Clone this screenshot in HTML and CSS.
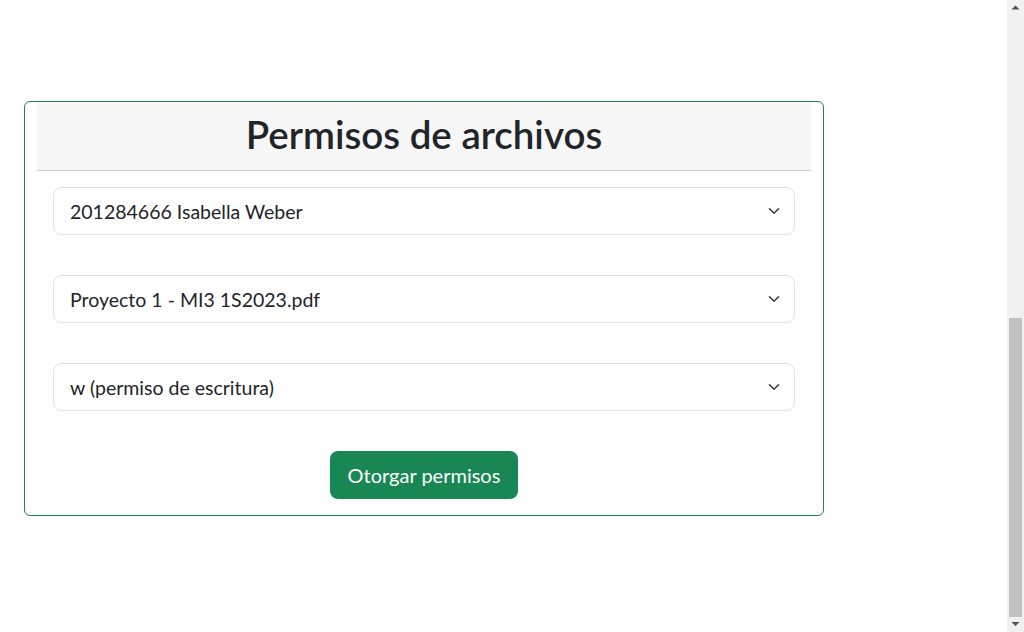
FILE: index.html
```html
<!DOCTYPE html>
<html lang="es">
<head>
<meta charset="utf-8">
<title>Permisos de archivos</title>
<link rel="stylesheet" href="styles.css">
</head>
<body>
<main class="page">
  <section class="card">
    <header class="card-header">
      <h1 class="title">Permisos de archivos</h1>
    </header>
    <form class="card-body">
      <div class="select">
        <span class="select-text">201284666 Isabella Weber</span>
        <svg class="chevron" width="16" height="12" viewBox="0 0 16 16"><path d="m2 5 6 6 6-6" fill="none" stroke="#343a40" stroke-width="2" stroke-linecap="round" stroke-linejoin="round"/></svg>
      </div>
      <div class="select">
        <span class="select-text">Proyecto 1 - MI3 1S2023.pdf</span>
        <svg class="chevron" width="16" height="12" viewBox="0 0 16 16"><path d="m2 5 6 6 6-6" fill="none" stroke="#343a40" stroke-width="2" stroke-linecap="round" stroke-linejoin="round"/></svg>
      </div>
      <div class="select">
        <span class="select-text">w (permiso de escritura)</span>
        <svg class="chevron" width="16" height="12" viewBox="0 0 16 16"><path d="m2 5 6 6 6-6" fill="none" stroke="#343a40" stroke-width="2" stroke-linecap="round" stroke-linejoin="round"/></svg>
      </div>
      <div class="actions">
        <button type="button" class="btn">Otorgar permisos</button>
      </div>
    </form>
  </section>
</main>
<aside class="scrollbar" aria-hidden="true">
  <div class="sb-btn">
    <svg width="17" height="15" viewBox="0 0 17 15"><polygon points="4.5,9.5 12.5,9.5 8.5,5.5" fill="#505050"/></svg>
  </div>
  <div class="sb-track">
    <div class="sb-thumb"></div>
  </div>
  <div class="sb-btn">
    <svg width="17" height="15" viewBox="0 0 17 15"><polygon points="4.5,5 12.5,5 8.5,9" fill="#505050"/></svg>
  </div>
</aside>
</body>
</html>
```

FILE: styles.css
```css
html, body {
  height: 100%;
  overflow: hidden;
}
body {
  margin: 0;
  background: #fff;
  color: #212529;
  font-family: Lato, "Liberation Sans", sans-serif;
  display: flex;
}
.page {
  flex: 1;
  padding: 101px 0 0 24px;
}
.card {
  width: 800px;
  box-sizing: border-box;
  border: 1px solid #198754;
  border-radius: 6px;
  padding: 0 12px;
}
.card-header {
  background: #f7f7f7;
  border-bottom: 1px solid #cfcfcf;
  height: 68px;
  display: flex;
  align-items: center;
  justify-content: center;
}
.title {
  margin: 0;
  padding-bottom: 4px;
  font-size: 38.5px;
  font-weight: 600;
  line-height: 1.2;
}
.card-body {
  margin: 0;
  padding: 16px;
  display: flex;
  flex-direction: column;
  gap: 40px;
}
.select {
  height: 48px;
  box-sizing: border-box;
  border: 1px solid #dee2e6;
  border-radius: 8px;
  padding: 0 12px 0 16px;
  display: flex;
  align-items: center;
  justify-content: space-between;
  font-size: 19.5px;
}
.chevron {
  flex: none;
}
.actions {
  display: flex;
  justify-content: center;
}
.btn {
  height: 48px;
  padding: 0 18px;
  border: 0;
  border-radius: 8px;
  background: #198754;
  color: #fff;
  font-family: inherit;
  font-size: 20px;
}
.scrollbar {
  width: 17px;
  height: 100%;
  flex: none;
  background: #f1f1f1;
  display: flex;
  flex-direction: column;
}
.sb-btn {
  height: 15px;
  flex: none;
}
.sb-btn svg {
  display: block;
}
.sb-track {
  flex: 1;
  display: flex;
  flex-direction: column;
  justify-content: flex-end;
  padding: 0 2px;
}
.sb-thumb {
  height: 299px;
  background: #c1c1c1;
}
```
